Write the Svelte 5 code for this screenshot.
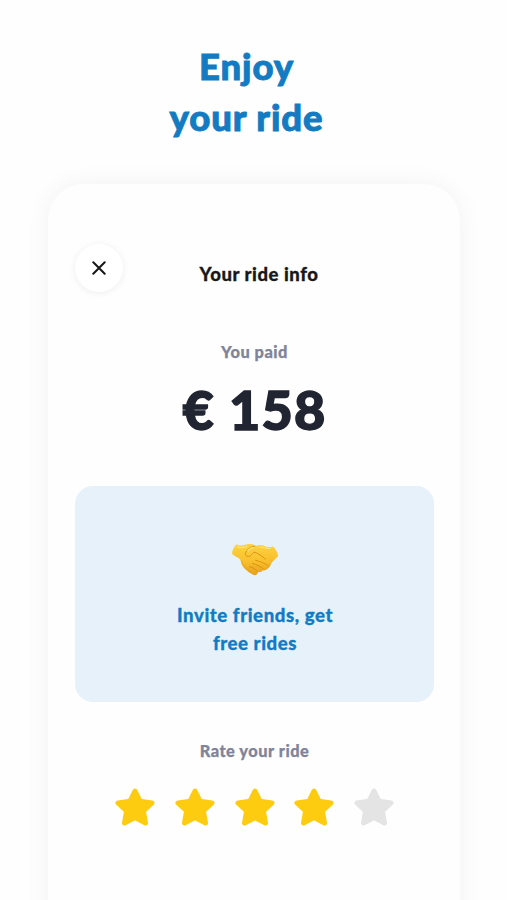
<script>
	let rating = 4;
	const stars = [1, 2, 3, 4, 5];

	function rate(value) {
		rating = value;
	}
</script>

<main>
	<h1>Enjoy<br />your ride</h1>

	<section class="phone">
		<header>
			<button class="close" aria-label="Close">
				<svg width="14" height="14" viewBox="0 0 14 14">
					<path d="M1.3 1.3L12.7 12.7M12.7 1.3L1.3 12.7" />
				</svg>
			</button>
			<h2>Your ride info</h2>
		</header>

		<p class="label paid">You paid</p>
		<p class="price">€ 158</p>

		<div class="invite">
			<svg class="hands" width="48" height="34" viewBox="0 0 48 34">
				<defs>
					<linearGradient id="skin" x1="0" y1="0" x2="0" y2="1">
						<stop offset="0" stop-color="#fdd243" />
						<stop offset="0.55" stop-color="#f9c02d" />
						<stop offset="1" stop-color="#e5a01b" />
					</linearGradient>
				</defs>
				<!-- right hand -->
				<path fill="url(#skin)" d="M22 5C26 1.5 30 1.2 34 3.2C36.5 4.3 39 4.2 42 3.5C44.5 5.5 46.5 9 47.2 13C45 15.5 42.5 17.8 40.5 19.8C39.5 24 36 27 32.5 27.5L20 22Z" />
				<!-- left hand and fingers -->
				<path fill="url(#skin)" d="M5.5 1.2C8 2.7 11 3 14 1.8C17 .6 21 .8 24.5 2.5L28 6L38.5 18.5C39.5 20.5 38 22.3 36 22C37 24.5 34.5 26.6 32.2 25.6C32.2 28.5 29.5 30 27 28.8C27 31.7 24 33 21.8 31.6C18.5 29.8 16.5 28 14.2 26.2C11 23.5 10.2 20.5 9.4 17C8 14.3 3.5 13.5 1 10.7C1.3 7 3 3.4 5.5 1.2Z" />
				<path class="crease" d="M23.7 3.1C19.5 3.4 16.4 6.1 14.5 10C13.5 12.5 17 14.6 19.3 12.8C21.1 11.5 21.7 9.2 24 9.2C28 11 31.5 13.5 34.5 16.2" />
				<path class="crease" d="M24.5 17.2C29 18.5 33 20 36 22M21.5 20.5C26 21.7 29.5 23.3 32.2 25.6M18.7 23.7C22.5 24.6 25 26.5 27 28.8" />
				<path class="crease light" d="M10.5 17.5C11.8 22.8 15.5 26.5 20 29.5" />
				<path class="shine" d="M16.8 8.2C18.5 5.7 20.7 4.5 23 4.4M6 3.5C9 5.2 13 4.7 16 3.2M29 4.2C32 3.8 35 6 39.5 5.4" />
			</svg>
			<p>Invite friends, get<br />free rides</p>
		</div>

		<p class="label rate">Rate your ride</p>
		<div class="stars">
			{#each stars as star}
				<button class:active={star <= rating} aria-label="{star} stars" on:click={() => rate(star)}>
					<svg width="40" height="40" viewBox="0 0 40 40">
						<path d="M20 3L25 13.2L37 15L28.4 23L30.5 35L20 29.6L9.5 35L11.6 23L3 15L15 13.2Z" />
					</svg>
				</button>
			{/each}
		</div>
	</section>
</main>

<style>
	:global(body) {
		margin: 0;
		background: #fefefe;
	}
	main {
		box-sizing: border-box;
		height: 900px;
		overflow: hidden;
		padding-top: 41px;
		font-family: Lato, "Open Sans", sans-serif;
		text-align: center;
	}
	h1, h2, p {
		margin: 0;
	}
	button {
		padding: 0;
		border: 0;
		background: none;
		cursor: pointer;
	}
	svg {
		display: block;
	}
	h1 {
		padding-right: 14px;
		font-size: 36.5px;
		line-height: 51px;
		font-weight: 900;
		letter-spacing: 0.9px;
		color: #137bc1;
		-webkit-text-stroke: 0.9px #137bc1;
	}
	.phone {
		box-sizing: border-box;
		width: 412px;
		height: 780px;
		margin: 41px 0 0 48px;
		padding: 60px 26px 0 27px;
		border-radius: 36px;
		background: #fefefe;
		box-shadow: 0 0 26px rgba(0, 0, 0, 0.05);
	}
	header {
		display: grid;
		grid-template-columns: 48px 1fr 48px;
		height: 48px;
	}
	.close {
		display: flex;
		align-items: center;
		justify-content: center;
		width: 48px;
		height: 48px;
		border-radius: 50%;
		background: #fff;
		box-shadow: 0 1px 7px rgba(0, 0, 0, 0.07);
	}
	.close path {
		fill: none;
		stroke: #161616;
		stroke-width: 2;
		stroke-linecap: round;
	}
	h2 {
		padding: 18px 0 0 9px;
		font-size: 18.5px;
		line-height: 24px;
		font-weight: 900;
		letter-spacing: 0.55px;
		color: #18181a;
		-webkit-text-stroke: 0.3px #18181a;
	}
	.label {
		font-size: 16.4px;
		line-height: 20px;
		font-weight: 900;
		letter-spacing: 0.5px;
		color: #80849a;
		-webkit-text-stroke: 0.25px #80849a;
	}
	.paid {
		margin-top: 50px;
	}
	.price {
		margin-top: 18px;
		font-size: 54px;
		line-height: 60px;
		font-weight: 900;
		letter-spacing: 1.2px;
		color: #212532;
		-webkit-text-stroke: 1.4px #212532;
	}
	.invite {
		display: flex;
		flex-direction: column;
		align-items: center;
		box-sizing: border-box;
		height: 216px;
		margin-top: 46px;
		padding-top: 57px;
		border-radius: 18px;
		background: #e6f1fa;
	}
	.invite p {
		margin-top: 24px;
		padding-left: 1px;
		font-size: 18.6px;
		line-height: 28px;
		font-weight: 900;
		letter-spacing: 0.57px;
		color: #137bc1;
		-webkit-text-stroke: 0.3px #137bc1;
	}
	.crease {
		fill: none;
		stroke: #d88c12;
		stroke-width: 0.9;
		stroke-linecap: round;
	}
	.light {
		opacity: 0.4;
	}
	.shine {
		fill: none;
		stroke: #ffe574;
		stroke-width: 1.2;
		stroke-linecap: round;
	}
	.rate {
		margin-top: 39px;
	}
	.stars {
		display: flex;
		justify-content: center;
		gap: 19.7px;
		margin-top: 27px;
	}
	.stars path {
		fill: #e4e4e4;
		stroke: #e4e4e4;
		stroke-width: 5;
		stroke-linejoin: round;
	}
	.stars .active path {
		fill: #fdcc11;
		stroke: #fdcc11;
	}
</style>
